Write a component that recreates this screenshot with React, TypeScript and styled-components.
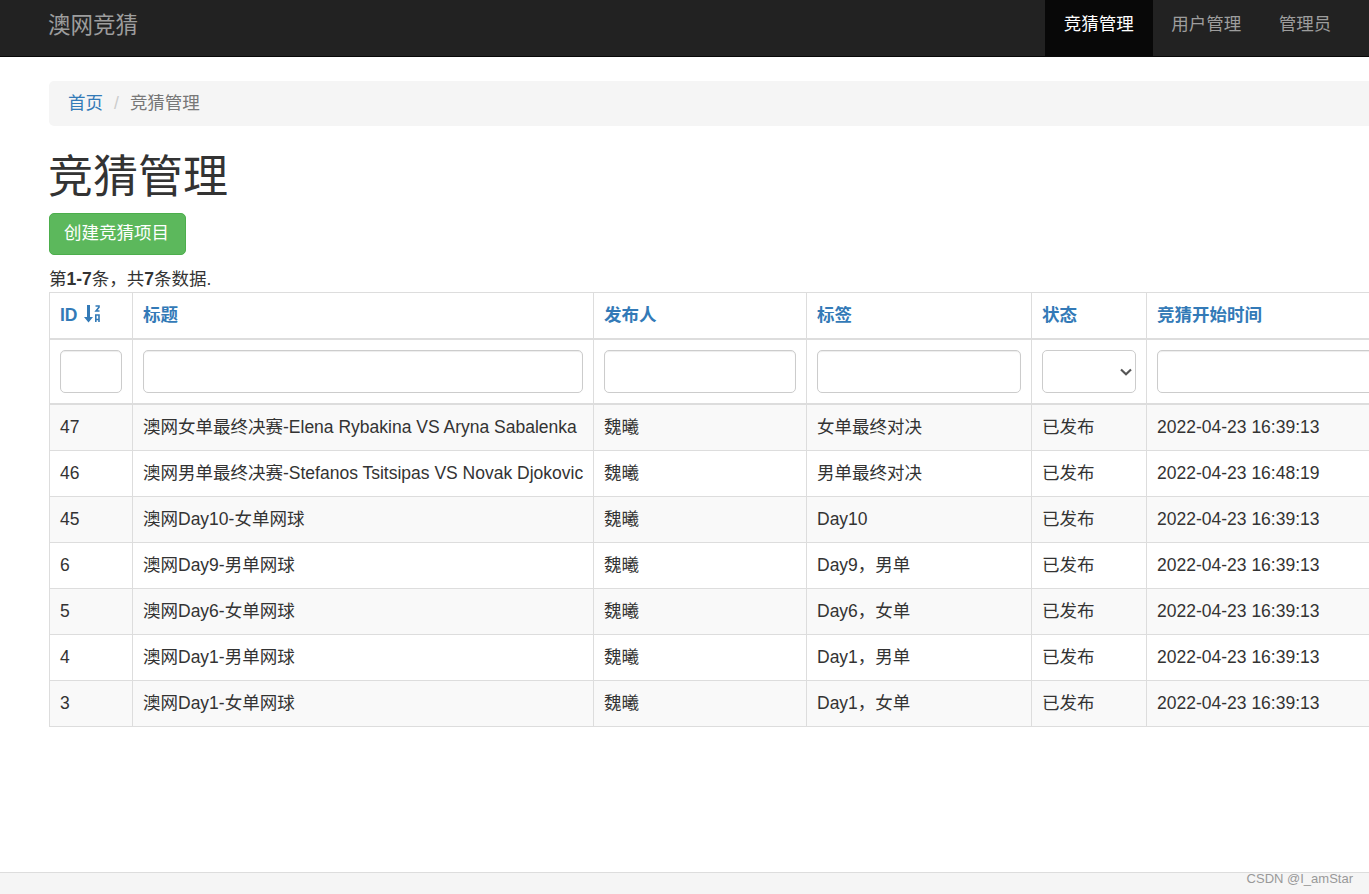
import styled, { createGlobalStyle } from 'styled-components';

const GlobalStyle = createGlobalStyle`
    html, body {
        margin: 0;
        height: 100%;
        overflow: hidden;
        background: #fff;
    }
    body {
        font-family: "Liberation Sans", "Noto Sans CJK SC", sans-serif;
        font-size: 17.5px;
        line-height: 25px;
        color: #333;
    }
    * {
        box-sizing: border-box;
    }
`

const Page = styled.div`
    position: relative;
    display: flex;
    flex-direction: column;
    height: 894px;
    overflow: hidden;
`

const Navbar = styled.nav`
    flex: none;
    display: flex;
    justify-content: space-between;
    height: 57px;
    padding: 0 19px 0 48px;
    background-color: #222;
    border-bottom: 1px solid #080808;
`

const Brand = styled.a`
    font-size: 22.5px;
    line-height: 52px;
    color: #9d9d9d;
`

const NavList = styled.div`
    display: flex;
`

const NavItem = styled.a<{ $active?: boolean }>`
    padding: 0 18.75px;
    line-height: 48px;
    color: ${(props) => (props.$active ? '#fff' : '#9d9d9d')};
    background-color: ${(props) => (props.$active ? '#080808' : 'transparent')};
`

const Main = styled.main`
    flex: 1;
    width: 1600px;
    padding: 24px 0 0 49px;
`

const Breadcrumb = styled.div`
    display: flex;
    height: 45px;
    margin-bottom: 27px;
    padding: 10px 19px;
    background-color: #f5f5f5;
    border-radius: 5px;
    color: #777;
`

const Crumb = styled.a`
    color: #337ab7;
`

const CrumbSep = styled.span`
    padding: 0 11px;
    color: #ccc;
`

const Title = styled.h1`
    margin: 0 0 10px -1px;
    font-size: 45px;
    font-weight: 400;
    line-height: 50px;
`

const CreateButton = styled.button`
    display: block;
    height: 42px;
    margin: 0 0 12px;
    padding: 0 16px 2px 14px;
    font: inherit;
    color: #fff;
    background-color: #5cb85c;
    border: 1px solid #4cae4c;
    border-radius: 5px;
`

const Summary = styled.div`
    height: 25px;
`

const Table = styled.table`
    width: 1397px;
    table-layout: fixed;
    border-collapse: collapse;
`

const HeadCell = styled.th`
    padding: 10px;
    text-align: left;
    vertical-align: bottom;
    border: 1px solid #ddd;
    border-bottom-width: 2px;
`

const HeadLink = styled.a`
    display: flex;
    align-items: center;
    gap: 6px;
    color: #337ab7;
`

const SortIcon = styled.svg`
    width: 16px;
    height: 18px;
    margin-top: -4px;
    color: #337ab7;
`

const FilterCell = styled.td`
    padding: 10px;
    border: 1px solid #ddd;
    border-bottom-width: 2px;
`

const FilterInput = styled.input`
    display: block;
    width: 100%;
    height: 43px;
    padding: 6px 12px;
    background-color: #fff;
    border: 1px solid #ccc;
    border-radius: 5px;
    box-shadow: inset 0 1px 1px rgba(0, 0, 0, 0.075);
`

const SelectWrap = styled.div`
    position: relative;
`

const FilterSelect = styled.select`
    display: block;
    width: 100%;
    height: 43px;
    padding: 6px;
    appearance: none;
    background-color: #fff;
    border: 1px solid #ccc;
    border-radius: 5px;
`

const SelectArrow = styled.svg`
    position: absolute;
    top: 18px;
    right: 4px;
    width: 12px;
    height: 8px;
    pointer-events: none;
`

const Row = styled.tr`
    &:nth-child(odd) {
        background-color: #f9f9f9;
    }
`

const Cell = styled.td`
    height: 46px;
    padding: 10px;
    white-space: nowrap;
    border: 1px solid #ddd;
`

const Footer = styled.footer`
    flex: none;
    height: 22px;
    background-color: #f5f5f5;
    border-top: 1px solid #ddd;
`

const Watermark = styled.span`
    position: absolute;
    right: 16px;
    bottom: 7px;
    font-size: 13px;
    line-height: 16px;
    color: #999;
`

const columns = [
    { title: 'ID', width: 83 },
    { title: '标题', width: 461 },
    { title: '发布人', width: 213 },
    { title: '标签', width: 225 },
    { title: '状态', width: 115 },
    { title: '竞猜开始时间', width: 300 },
]

const rows = [
    ['47', '澳网女单最终决赛-Elena Rybakina VS Aryna Sabalenka', '魏曦', '女单最终对决', '已发布', '2022-04-23 16:39:13'],
    ['46', '澳网男单最终决赛-Stefanos Tsitsipas VS Novak Djokovic', '魏曦', '男单最终对决', '已发布', '2022-04-23 16:48:19'],
    ['45', '澳网Day10-女单网球', '魏曦', 'Day10', '已发布', '2022-04-23 16:39:13'],
    ['6', '澳网Day9-男单网球', '魏曦', 'Day9，男单', '已发布', '2022-04-23 16:39:13'],
    ['5', '澳网Day6-女单网球', '魏曦', 'Day6，女单', '已发布', '2022-04-23 16:39:13'],
    ['4', '澳网Day1-男单网球', '魏曦', 'Day1，男单', '已发布', '2022-04-23 16:39:13'],
    ['3', '澳网Day1-女单网球', '魏曦', 'Day1，女单', '已发布', '2022-04-23 16:39:13'],
]

// glyphicon-sort-by-alphabet-alt
const SortByAlphabetAlt = () => (
    <SortIcon viewBox="0 0 16 18">
        <path d="M3 0 H6 V12 H9 L4.5 17.5 L0 12 H3 Z" fill="currentColor" />
        <path d="M11.5 1 H15 V2.2 L12 6 H15.5" fill="none" stroke="currentColor" strokeWidth="1.6" />
        <path d="M11.8 17 V10 H15 V17 M11.8 14.5 H15" fill="none" stroke="currentColor" strokeWidth="1.6" />
    </SortIcon>
)

export default function App() {
    return (
        <Page>
            <GlobalStyle />
            <Navbar>
                <Brand>澳网竞猜</Brand>
                <NavList>
                    <NavItem $active>竞猜管理</NavItem>
                    <NavItem>用户管理</NavItem>
                    <NavItem>管理员</NavItem>
                </NavList>
            </Navbar>
            <Main>
                <Breadcrumb>
                    <Crumb>首页</Crumb>
                    <CrumbSep>/</CrumbSep>
                    <span>竞猜管理</span>
                </Breadcrumb>
                <Title>竞猜管理</Title>
                <CreateButton>创建竞猜项目</CreateButton>
                <Summary>第<b>1-7</b>条，共<b>7</b>条数据.</Summary>
                <Table>
                    <colgroup>
                        {columns.map((column) => (
                            <col key={column.title} width={column.width} />
                        ))}
                    </colgroup>
                    <thead>
                        <tr>
                            {columns.map((column) => (
                                <HeadCell key={column.title}>
                                    <HeadLink>
                                        {column.title}
                                        {column.title === 'ID' && <SortByAlphabetAlt />}
                                    </HeadLink>
                                </HeadCell>
                            ))}
                        </tr>
                        <tr>
                            {columns.map((column) => (
                                <FilterCell key={column.title}>
                                    {column.title === '状态' ? (
                                        <SelectWrap>
                                            <FilterSelect />
                                            <SelectArrow viewBox="0 0 12 8">
                                                <path d="M1 1.5 L6 6.2 L11 1.5" fill="none" stroke="#555" strokeWidth="2.2" />
                                            </SelectArrow>
                                        </SelectWrap>
                                    ) : (
                                        <FilterInput />
                                    )}
                                </FilterCell>
                            ))}
                        </tr>
                    </thead>
                    <tbody>
                        {rows.map((row) => (
                            <Row key={row[0]}>
                                {row.map((value, index) => (
                                    <Cell key={index}>{value}</Cell>
                                ))}
                            </Row>
                        ))}
                    </tbody>
                </Table>
            </Main>
            <Footer />
            <Watermark>CSDN @I_amStar</Watermark>
        </Page>
    );
}
